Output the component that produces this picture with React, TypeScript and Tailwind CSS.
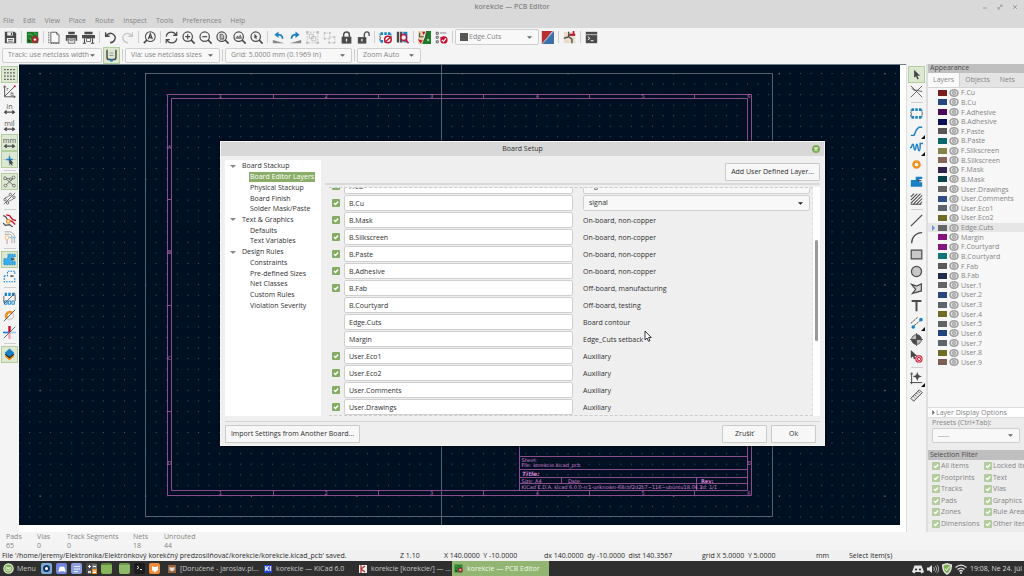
import type { ReactNode } from 'react';
import clsx from 'clsx';

const K = '#4a4a4a';
const B = '#1a81c4';
const R = '#c8102e';
const O = '#f2901a';

const magnifier = (inner: ReactNode) => (
  <>
    <circle cx="7" cy="7" r="5.8" fill="none" stroke={K} strokeWidth="1.5" />
    <path d="M11 11l4.500 4.500" stroke={K} strokeWidth="2" />
    {inner}
  </>
);

const unitArrow = <path d="M2 12.500h12M4.500 10.500L2 12.500l2.500 2M11.500 10.500l2.500 2-2.500 2" fill="none" stroke={K} strokeWidth="1.500" />;

const unitText = (label: string) => (
  <>
    <text x="8" y="8" fontSize="9" textAnchor="middle" fill="#555">{label}</text>
    {unitArrow}
  </>
);

const chip = (
  <>
    <path d="M1.500 3v2.500M14.500 3v2.500M1.500 10.500V13M14.500 10.500V13" stroke={B} strokeWidth="1.500" />
    <path d="M2 1.500h3v3.500H2zM6.500 1.500h3v3.500h-3zM11 1.500h3v3.500h-3zM2 11h3v3.500H2zM6.500 11h3v3.500h-3zM11 11h3v3.500h-3z" fill={B} />
    <path d="M1 6v1.500c1.500 0 1.500 2 0 2V11M15 6v4" fill="none" stroke={K} strokeWidth="1" />
  </>
);

const ICONS: Record<string, ReactNode> = {
  save: (
    <>
      <path d="M1 1h12l2 2v12H1z" fill={K} />
      <path d="M4 1.500h7v4H4zM3.500 8.500h9v5.500h-9z" fill="#f5f5f5" />
      <path d="M8.500 2h1.500v3H8.500zM5 10h6v1H5zM5 12h6v1H5z" fill={K} />
    </>
  ),
  setup: (
    <>
      <path d="M1 1h14v14H1z" fill="#1d7a2a" />
      <path d="M2 4h4l3 3M4 8l4 5M10 2l4 3" fill="none" stroke="#6ac06a" strokeWidth="1" />
      <circle cx="4" cy="12" r="1.200" fill="#0b3d12" />
      <circle cx="11" cy="10.500" r="3.500" fill="none" stroke={R} strokeWidth="2.200" strokeDasharray="2 .8" />
      <circle cx="11" cy="10.500" r="2" fill="#f5f5f5" stroke={R} strokeWidth="1" />
    </>
  ),
  page: (
    <>
      <path d="M3.500 1.500h7l3 3v10h-10z" fill="#fafafa" stroke={K} strokeWidth="1" />
      <path d="M10.500 1.500v3h3M1 1v14M3 15.500h11" fill="none" stroke={K} strokeWidth="1" strokeDasharray="2 1" />
    </>
  ),
  print: (
    <>
      <path d="M4 1h8v3H4zM1 5h14v7h-2V9H3v3H1z" fill={K} />
      <path d="M4 10h8v5H4z" fill="#fff" stroke={K} />
      <path d="M5.500 12h5" stroke={K} />
    </>
  ),
  plot: (
    <>
      <path d="M3 1h10v3H3zM0 5h16v4H0z" fill={K} />
      <path d="M3 9v5.500M13 9v5.500M1 15h4M11 15h4" stroke={K} strokeWidth="1.300" />
      <path d="M5.500 9h5v4h-5z" fill="#fff" stroke={K} />
    </>
  ),
  undo: <path d="M2 1.500v5h5M2 6.500C5 3 9 2 12 4.500c3.500 3 1.500 9.500-4.500 10" fill="none" stroke={K} strokeWidth="1.700" />,
  redo: <path d="M14 1.500v5H9M14 6.500C11 3 7 2 4 4.500c-3.500 3-1.500 9.500 4.500 10" fill="none" stroke="#c4c4c4" strokeWidth="1.500" />,
  find: (
    <>
      <circle cx="9" cy="7" r="6" fill="none" stroke={K} strokeWidth="1.300" />
      <path d="M5 11l-4 4" stroke={K} strokeWidth="2" />
      <path d="M6.500 10L9 3.500l2.500 6.500M7.500 8h3" fill="none" stroke={K} strokeWidth="1.600" />
    </>
  ),
  refresh: (
    <path d="M1.500 7C2 3 5 1.500 8 1.500c2.500 0 4.500 1.500 5.500 3.500M14.500 1v4.500H10M14.500 9c-.5 4-3.500 5.500-6.500 5.500-2.500 0-4.500-1.500-5.500-3.500M1.500 15v-4.500H6" fill="none" stroke={K} strokeWidth="1.500" />
  ),
  zoomIn: magnifier(<path d="M7 4v6M4 7h6" stroke={K} strokeWidth="1.500" />),
  zoomOut: magnifier(<path d="M4 7h6" stroke={K} strokeWidth="1.500" />),
  zoomFit: magnifier(<path d="M5 4h3l1.500 1.500V10H5z" fill="#bbb" stroke={K} strokeWidth="1" />),
  zoomObjects: magnifier(<path d="M3.500 9l2-3 1.500 2 2-3 1.500 4z" fill="#999" stroke={K} strokeWidth=".8" />),
  zoomTool: magnifier(<path d="M5.500 3.500l4 4-2 .2 1 2-1.200.5-.8-2-1.200 1z" fill={K} />),
  rotateLeft: (
    <>
      <path d="M1 15V11l14 4z" fill="#888" />
      <path d="M13 9.500c0-4-3-5.500-7-5" fill="none" stroke={B} strokeWidth="2.200" />
      <path d="M8 .5L3 4.500l5 4z" fill={B} />
    </>
  ),
  rotateRight: (
    <>
      <path d="M15 15V11L1 15z" fill="#888" />
      <path d="M3 9.500c0-4 3-5.500 7-5" fill="none" stroke={B} strokeWidth="2.200" />
      <path d="M8 .5l5 4-5 4z" fill={B} />
    </>
  ),
  group: (
    <>
      <path d="M1.500 1.500h13v13h-13z" fill="none" stroke="#b5b5b5" strokeDasharray="2 1.500" />
      <path d="M4 4h5v5H4zM7 7h5v5H7z" fill="none" stroke="#b5b5b5" />
      <path d="M0 0h3v3H0zM13 0h3v3h-3zM0 13h3v3H0zM13 13h3v3h-3z" fill="#c0c0c0" />
    </>
  ),
  ungroup: (
    <>
      <path d="M1.500 2.500h7v7h-7zM7.500 7.500h7v7h-7z" fill="none" stroke="#c2c2c2" strokeDasharray="2 1" />
      <path d="M1 1.500h2v2H1zM7.500 1.500h2v2h-2zM1 8.500h2v2H1zM13 6.500h2v2h-2zM6.500 13.500h2v2h-2zM13 13.500h2v2h-2z" fill="#b5b5b5" />
    </>
  ),
  lock: (
    <>
      <path d="M4.500 8V4.500C4.500 0 11.500 0 11.500 4.500V8" fill="none" stroke={K} strokeWidth="1.800" />
      <path d="M2 7h12v8.500H2z" fill={K} />
      <path d="M8 9.500v3.500" stroke="#eee" strokeWidth="1.600" />
    </>
  ),
  unlock: (
    <>
      <path d="M9 8V4.500C9 0 15 0 15 4.500V6" fill="none" stroke={K} strokeWidth="1.600" />
      <path d="M1 7.500h10.500v8H1z" fill={K} />
      <path d="M6 9.500v3.500" stroke="#eee" strokeWidth="1.600" />
    </>
  ),
  footprintEditor: (
    <>
      {chip}
      <circle cx="11" cy="10.500" r="4" fill="#fff" stroke={R} strokeWidth="1.800" />
      <path d="M8.500 13l5-5" stroke={R} strokeWidth="1.600" />
    </>
  ),
  browser: (
    <>
      <path d="M1 1h3v13H1zM5 1h3v13H5z" fill={K} />
      <path d="M9 1h5v13H9z" fill={B} />
      <circle cx="9.500" cy="8" r="3.500" fill="#eaf4fb" stroke={R} strokeWidth="1.600" />
      <path d="M12 11l3.500 4" stroke={R} strokeWidth="2" />
    </>
  ),
  update: (
    <>
      <path d="M0 0h9L5 16H0z" fill="#e8cfae" />
      <path d="M10 0h6v16H5l3-7z" fill="#1d7a2a" />
      <path d="M2 2v5h5M11 3v4l-4 5" fill="none" stroke={K} strokeWidth="1.300" />
      <path d="M5 1h4L7 5zM0 10l6 2-3 3z" fill={R} />
      <circle cx="12.500" cy="11" r="1.500" fill="#9ad79a" />
    </>
  ),
  drc: (
    <>
      <path d="M1.500 1.500h2.500v2.500H1.500zM1.500 6.500h2.500v2.500H1.500zM1.500 12h2.500v2.500H1.500z" fill="none" stroke={K} />
      <path d="M6 2.500h8M6 8h3" stroke="#888" strokeWidth="1.300" />
      <circle cx="11" cy="11" r="4.500" fill={R} />
      <path d="M8.500 11l2 2 3-4" fill="none" stroke="#fff" strokeWidth="1.500" />
    </>
  ),
  layerPair: (
    <>
      <path d="M1 0h13L1 16z" fill="#b5302f" />
      <path d="M16 0v16H2z" fill="#3c6ea8" />
      <path d="M15 0L1 16" stroke="#7f8fb4" strokeWidth="1" />
    </>
  ),
  scripting: (
    <>
      <path d="M1 1h14v14H1z" fill="#eadccb" />
      <path d="M7 1v6L1 9M7 7l4 3v5M7 5h8" fill="none" stroke={K} strokeWidth="1.600" />
      <path d="M8 3.500h7v2H8zM12 0h2v4h-2z" fill={R} />
    </>
  ),
  console: (
    <>
      <path d="M1 1h14v14H1z" fill={K} />
      <path d="M1 4.500h14" stroke="#ddd" />
      <path d="M3.500 7l2.500 2-2.500 2M7 12h3.500" fill="none" stroke="#fff" strokeWidth="1.200" />
    </>
  ),
  trackWidth: (
    <>
      <path d="M2.500 1v9c0 2 1 3 3 3h5c2 0 3-1 3-3V1" fill="none" stroke={K} strokeWidth="1.800" />
      <path d="M5.500 5h5M5.500 8h5" stroke="#999" strokeWidth="1.300" />
      <circle cx="8" cy="14" r="1.800" fill={B} />
    </>
  ),
  grid: <path d="M1.500 2h13M1.500 6h13M1.500 10h13M1.500 14h13" stroke="#3c3c3c" strokeWidth="1.700" strokeDasharray="1.700 2" />,
  polar: (
    <>
      <path d="M2 1v13.500h13M2 14L14 2M.5 3L2 1l1.500 2M13 13l2 1.500-2 1.500" fill="none" stroke={K} strokeWidth="1.100" />
      <text x="4" y="7" fontSize="7" fill={K}>r</text>
      <text x="9" y="13" fontSize="7" fill={K}>θ</text>
      <circle cx="14.500" cy="1.500" r="1.200" fill={R} />
    </>
  ),
  inch: unitText('in'),
  mil: unitText('mil'),
  mm: unitText('mm'),
  cursorShape: (
    <>
      <path d="M8 0v16M0 8h16" stroke="#b5b5b5" strokeWidth=".8" />
      <path d="M8 4v8M4 8h8" stroke={B} strokeWidth="1.800" />
      <path d="M8 7l5 5.500-2.200.2 1.200 2.500-1.300.6-1.200-2.500L8 15z" fill={K} />
    </>
  ),
  ratsnest: (
    <>
      <path d="M3 4l10 9M3 13L13 4M3 4l7 1" fill="none" stroke={K} strokeWidth=".9" />
      <g fill="#f4f8f0" stroke={K} strokeWidth=".9">
        <circle cx="2.500" cy="4" r="1.700" /><circle cx="13" cy="3" r="1.700" /><circle cx="3" cy="13" r="1.700" /><circle cx="13.500" cy="13" r="1.700" /><circle cx="9.500" cy="5" r="1.500" />
      </g>
    </>
  ),
  curvedRats: (
    <>
      <path d="M2 9c0-4 4-1 7-6M5 14c1-5 7-2 9-8M1 15L15 1" fill="none" stroke={K} strokeWidth=".9" />
      <g fill="#fff" stroke={K} strokeWidth=".9">
        <circle cx="2.500" cy="9.500" r="1.500" /><circle cx="9" cy="3" r="1.500" /><circle cx="5.500" cy="13.500" r="1.500" /><circle cx="13.500" cy="6.500" r="1.500" />
      </g>
    </>
  ),
  highContrast: (
    <>
      <path d="M0 2l3 1 4 6M0 11l3 3 5-1 4 3" fill="none" stroke={K} strokeWidth="1.500" />
      <path d="M4 1l4 1 4 5 4 1M6 8l5 1 4 4" fill="none" stroke={R} strokeWidth="1.700" />
      <circle cx="6.500" cy="9" r="2.200" fill="#fff" stroke={O} strokeWidth="1.500" />
    </>
  ),
  netHighlight: (
    <>
      <path d="M2 1h6c3 0 6 3 6 6v8M2 4h6c2 0 3 2 3 4v7" fill="none" stroke="#aaa" strokeWidth="1.200" />
      <path d="M7 8h9" stroke="#8fc1e6" strokeWidth="1.500" />
      <path d="M5 10v6" stroke="#eaa4ae" strokeWidth="1.800" />
      <circle cx="5" cy="8" r="2.200" fill="#fff" stroke="#f6c385" strokeWidth="1.300" />
    </>
  ),
  zoneFill: (
    <>
      <path d="M1 7h5V1.500h9V5h-3.500v5H15v4.500H1z" fill="#3aaee8" stroke={B} strokeWidth="1" strokeDasharray="2 1" />
      <path d="M10 7.500h4" stroke={K} strokeWidth="2" />
    </>
  ),
  zoneOutline: (
    <>
      <path d="M1.500 7h4V1.500h9V5M14.500 10v4.500h-13V7" fill="none" stroke={B} strokeWidth="1.300" strokeDasharray="2 1.300" />
      <path d="M9 7.500h4" stroke={K} strokeWidth="1.800" />
    </>
  ),
  padSketch: (
    <>
      <path d="M2 1h3v4H2zM6.500 1h3v4h-3zM11 1h3v4h-3z" fill={B} />
      <path d="M2 11h3v4H2zM6.500 11h3v4h-3zM11 11h3v4h-3z" fill="#fff" stroke={B} strokeWidth="1.200" />
      <path d="M1 5v8M15 3v8M1 15L15 1" stroke={K} strokeWidth="1" />
    </>
  ),
  viaSketch: (
    <>
      <circle cx="8" cy="8" r="5" fill="none" stroke="#d2d2d2" strokeWidth="2" />
      <path d="M3.500 12.500A6.500 6.500 0 0112.500 3.500L9.800 6.200A2.500 2.500 0 006.200 9.800z" fill={O} />
      <path d="M1 15L15 1" stroke={K} strokeWidth="1" />
    </>
  ),
  trackSketch: (
    <>
      <path d="M0 8h8" stroke={B} strokeWidth="2" />
      <path d="M8 0v8" stroke={R} strokeWidth="3" />
      <path d="M8 8h8" stroke="#9cc8ea" strokeWidth="2" />
      <path d="M8 8v8" stroke="#eda8b2" strokeWidth="3" />
      <path d="M1 15L15 1" stroke={K} strokeWidth="1" />
    </>
  ),
  layers: (
    <>
      <path d="M2 10l6 5.500 6-5.500-6-4z" fill={O} />
      <path d="M2 8l6 5 6-5-6-4z" fill="#2b2b2b" />
      <path d="M2 6l6 5 6-5-6-5.500z" fill={B} />
    </>
  ),
  arrow: <path d="M5 2v10l2.300-2 1.700 4 1.800-.8L9 9.500h3.500z" fill={K} />,
  localRats: <path d="M1 1l14 14M15 1L1 15M6 6.500h4M2 4l4 3M10 7l5 1" fill="none" stroke={K} strokeWidth="1" />,
  footprint: chip,
  route: <path d="M1 14h4l3-7 3-3h4" fill="none" stroke={B} strokeWidth="1.800" />,
  tune: <path d="M0 8h1.500c1 0 .5-4 2-4s1 7 2.500 7 1-7 2.500-7 1 8 2.500 8 1.500-3 1.500-6V3H16" fill="none" stroke={B} strokeWidth="1.700" />,
  via: <circle cx="8" cy="8" r="3.800" fill="none" stroke={O} strokeWidth="3" />,
  zone: (
    <>
      <path d="M1 6h6V2h8v3h-3.500v4H15v5.500H1z" fill={B} />
      <path d="M9 7h5" stroke={K} strokeWidth="1.600" />
    </>
  ),
  ruleArea: (
    <path d="M1 6l4-4M1 10l8-8M1 14l12-12M4.500 14.500l5-5M10 9l5-5M8 15l7-7M12 15l3-3M1 15h13" fill="none" stroke={K} strokeWidth="1.300" />
  ),
  line: <path d="M1 15L15 1" stroke={K} strokeWidth="1.500" />,
  arc: <path d="M2 15C2 8 7 2 15 2" fill="none" stroke={K} strokeWidth="1.500" />,
  rect: <path d="M1.500 2.500h13v11h-13z" fill="#c8c8c8" stroke={K} strokeWidth="1.500" />,
  circle: <circle cx="8" cy="8" r="6.200" fill="#c8c8c8" stroke={K} strokeWidth="1.500" />,
  poly: <path d="M2 3l6 2 6-2.500V11L3 14l4-5z" fill="#d4d4d4" stroke={K} strokeWidth="1.500" />,
  text: <path d="M2 2.500h12M8 2.500v12.500" fill="none" stroke={K} strokeWidth="2.400" />,
  dimension: (
    <>
      <path d="M1 9l9-8M5 12l7-6" stroke={K} strokeWidth="1.200" strokeDasharray="3 1" />
      <circle cx="4" cy="13.500" r="2.200" fill={B} />
      <circle cx="13.500" cy="4.500" r="2.200" fill={B} />
    </>
  ),
  origin: (
    <>
      <circle cx="8" cy="8" r="6" fill="#bbb" stroke={K} />
      <path d="M8 8V2a6 6 0 016 6zM8 8v6a6 6 0 01-6-6z" fill={K} />
      <path d="M8 0v16M0 8h16" stroke={K} strokeWidth="1" />
    </>
  ),
  erase: (
    <>
      <path d="M1 0v10l2.500-2 1.500 3.500L7 10.500 5.500 7.500H9z" fill={K} />
      <circle cx="11" cy="11" r="4.500" fill={R} />
      <circle cx="11" cy="11" r="3" fill="none" stroke="#fff" strokeWidth=".8" />
      <path d="M9.500 9.500l3 3M12.500 9.500l-3 3" stroke="#fff" />
    </>
  ),
  gridOrigin: (
    <>
      <path d="M2 1v14M0 13h15M.5 3L2 1l1.500 2" fill="none" stroke={K} strokeWidth="1.200" />
      <path d="M9 2l1 2.500L12.500 5.500 10 6.500 9 9 8 6.500 5.500 5.500 8 4.500z" fill={K} stroke={K} strokeWidth="1.500" />
    </>
  ),
  measure: (
    <>
      <path d="M1 11.500L11.500 1l3.500 3.500L4.500 15z" fill="#e8e8e8" stroke={K} strokeWidth="1.200" />
      <path d="M4 9l1.500 1.500M6 7l2 2M8 5l1.500 1.500M10 3l2 2" stroke={K} />
    </>
  ),
};

const Glyph = ({ name, className }: { name: string; className?: string }) => (
  <svg viewBox="0 0 16 16" className={clsx('block', className ?? 'h-[13px] w-[13px]')} aria-hidden="true">
    {ICONS[name]}
  </svg>
);

type ToolProps = { name: string; active?: boolean; menu?: boolean };

const Tool = ({ name, active, menu }: ToolProps) => (
  <button
    type="button"
    aria-label={name}
    className={clsx(
      'relative flex h-[17px] w-[17px] shrink-0 items-center justify-center',
      active && 'border border-[#b4cd9f] bg-[#dde8d3]',
    )}
  >
    <Glyph name={name} />
    {menu && (
      <svg viewBox="0 0 4 4" className="absolute right-0 bottom-0 h-1 w-1 fill-[#111]" aria-hidden="true">
        <path d="M4 0v4H0z" />
      </svg>
    )}
  </button>
);

const Sep = ({ flat }: { flat?: boolean }) => (
  <span className={clsx('flex shrink-0 items-center justify-center', flat ? 'h-[5px] w-[17px]' : 'h-[17px] w-[5px]')}>
    <span className={clsx('bg-[#cfcfcf]', flat ? 'h-px w-3' : 'h-3 w-px')} />
  </span>
);

type ToolsProps = { items: string[]; flat?: boolean; active?: string[]; menus?: string[] };

const Tools = ({ items, flat, active = [], menus = [] }: ToolsProps) => (
  <>
    {items.map((item, i) =>
      item === '|' ? <Sep key={i} flat={flat} /> : <Tool key={i} name={item} active={active.includes(item)} menu={menus.includes(item)} />,
    )}
  </>
);

type ComboProps = { label: string; value: string; className?: string; dark?: boolean; swatch?: boolean };

const Combo = ({ label, value, className, dark, swatch }: ComboProps) => (
  <span className={clsx('relative flex shrink-0 items-center rounded-[2px] border border-[#cfcfcf] bg-[#f8f8f8]', className)}>
    {swatch && <span className="ml-1 h-2 w-2 shrink-0 bg-[#555]" />}
    <select
      aria-label={label}
      className={clsx('h-full w-full appearance-none bg-transparent outline-none', swatch ? 'pl-px' : 'pl-[5px]', dark ? 'text-[#303030]' : 'text-[#858585]')}
    >
      <option>{value}</option>
    </select>
    <svg viewBox="0 0 6 3" className={clsx('pointer-events-none absolute right-[6px] h-[3px] w-[5px]', dark ? 'fill-[#222]' : 'fill-[#666]')}>
      <path d="M0 0h6L3 3z" />
    </svg>
  </span>
);

const Check = ({ label, showLabel, faded }: { label: string; showLabel?: boolean; faded?: boolean }) => (
  <label className="flex items-center gap-px whitespace-nowrap">
    <span className="grid h-2 w-2 shrink-0 place-items-center">
      <input
        type="checkbox"
        defaultChecked
        aria-label={label}
        className={clsx('col-start-1 row-start-1 h-2 w-2 appearance-none rounded-[1px]', faded ? 'bg-[#b3cc9f]' : 'bg-[#86ab64]')}
      />
      <svg viewBox="0 0 8 8" className="pointer-events-none col-start-1 row-start-1 h-2 w-2">
        <path d="M2 4l1.500 1.500L6.200 2.500" fill="none" stroke="#fff" strokeWidth="1.300" />
      </svg>
    </span>
    {showLabel && <span>{label}</span>}
  </label>
);

const MENUS = ['File', 'Edit', 'View', 'Place', 'Route', 'Inspect', 'Tools', 'Preferences', 'Help'];

const MAIN_TOOLS = [
  'save', '|', 'setup', '|', 'page', 'print', 'plot', '|', 'undo', 'redo', '|', 'find', '|',
  'refresh', 'zoomIn', 'zoomOut', 'zoomFit', 'zoomObjects', 'zoomTool', '|',
  'rotateLeft', 'rotateRight', 'group', 'ungroup', 'lock', 'unlock', '|',
  'footprintEditor', 'browser', '|', 'update', 'drc', '|',
];

const LEFT_TOOLS = [
  'grid', 'polar', 'inch', 'mil', 'mm', 'cursorShape', '|', 'ratsnest', 'curvedRats', '|',
  'highContrast', 'netHighlight', '|', 'zoneFill', 'zoneOutline', '|', 'padSketch', 'viaSketch', 'trackSketch', '|', 'layers',
];

const RIGHT_TOOLS = [
  'arrow', 'localRats', '|', 'footprint', 'route', 'tune', 'via', 'zone', 'ruleArea', '|',
  'line', 'arc', 'rect', 'circle', 'poly', 'text', 'dimension', 'origin', 'erase', '|', 'gridOrigin', 'measure',
];

const LAYERS: [string, string][] = [
  ['F.Cu', '#7a1f1f'], ['B.Cu', '#27477e'], ['F.Adhesive', '#4d0a55'], ['B.Adhesive', '#0a1157'],
  ['F.Paste', '#5a5555'], ['B.Paste', '#0a6668'], ['F.Silkscreen', '#86824a'], ['B.Silkscreen', '#86655a'],
  ['F.Mask', '#33244f'], ['B.Mask', '#08444c'], ['User.Drawings', '#646464'], ['User.Comments', '#2f4e86'],
  ['User.Eco1', '#5d646c'], ['User.Eco2', '#6f6d25'], ['Edge.Cuts', '#636767'], ['Margin', '#85157f'],
  ['F.Courtyard', '#85157f'], ['B.Courtyard', '#127679'], ['F.Fab', '#5a5a5a'], ['B.Fab', '#222b49'],
  ['User.1', '#646464'], ['User.2', '#27477e'], ['User.3', '#5d646c'], ['User.4', '#6f6d25'],
  ['User.5', '#5f6464'], ['User.6', '#1f437a'], ['User.7', '#5d646c'], ['User.8', '#6f6d25'], ['User.9', '#7d5f55'],
];

const FILTERS = [
  'All items', 'Locked items', 'Footprints', 'Text', 'Tracks', 'Vias',
  'Pads', 'Graphics', 'Zones', 'Rule Areas', 'Dimensions', 'Other items',
];

const TREE = [
  { title: 'Board Stackup', pages: ['Board Editor Layers', 'Physical Stackup', 'Board Finish', 'Solder Mask/Paste'] },
  { title: 'Text & Graphics', pages: ['Defaults', 'Text Variables'] },
  { title: 'Design Rules', pages: ['Constraints', 'Pre-defined Sizes', 'Net Classes', 'Custom Rules', 'Violation Severity'] },
];

const SETUP_ROWS = [
  { name: 'F.Cu', use: 'signal', optional: true },
  { name: 'B.Cu', use: 'signal', optional: true },
  { name: 'B.Mask', use: 'On-board, non-copper', optional: true },
  { name: 'B.Silkscreen', use: 'On-board, non-copper', optional: true },
  { name: 'B.Paste', use: 'On-board, non-copper', optional: true },
  { name: 'B.Adhesive', use: 'On-board, non-copper', optional: true },
  { name: 'B.Fab', use: 'Off-board, manufacturing', optional: true },
  { name: 'B.Courtyard', use: 'Off-board, testing', optional: false },
  { name: 'Edge.Cuts', use: 'Board contour', optional: false },
  { name: 'Margin', use: 'Edge_Cuts setback', optional: false },
  { name: 'User.Eco1', use: 'Auxiliary', optional: true },
  { name: 'User.Eco2', use: 'Auxiliary', optional: true },
  { name: 'User.Comments', use: 'Auxiliary', optional: true },
  { name: 'User.Drawings', use: 'Auxiliary', optional: true },
];

const COUNTS = [
  ['Pads', '65'], ['Vias', '0'], ['Track Segments', '0'], ['Nets', '18'], ['Unrouted', '44'],
];

// Drawing sheet in screen units: 1 mm is 2.112 units.
const BoardCanvas = () => (
  <svg viewBox="19 65 881 460" preserveAspectRatio="xMinYMin slice" className="h-full w-full bg-[#001023]">
    <defs>
      <pattern id="dots" x="24.200" y="68.200" width="10.560" height="10.560" patternUnits="userSpaceOnUse">
        <rect x="4.800" y="4.800" width="1" height="1" fill="#4a5563" />
      </pattern>
      <pattern id="majorDots" x="34.760" y="68.500" width="105.600" height="105.600" patternUnits="userSpaceOnUse">
        <rect x="4.800" y="4.800" width="1" height="1" fill="#8b929b" />
      </pattern>
    </defs>
    <rect x="19" y="65" width="881" height="460" fill="url(#dots)" />
    <rect x="19" y="65" width="881" height="460" fill="url(#majorDots)" />
    <g fill="none" stroke="#56616d">
      <path d="M145.500 73.500h627v443h-627zM441.500 65v460" />
    </g>
    <g fill="none" stroke="#8d4c8c">
      <path d="M167.500 94.500h584v401h-584zM171.500 98.500h576v392h-576z" />
      <path d="M273.500 94.500v4M378.500 94.500v4M483.500 94.500v4M589.500 94.500v4M694.500 94.500v4M273.500 490.500v5M378.500 490.500v5M483.500 490.500v5M589.500 490.500v5M694.500 490.500v5" />
      <path d="M167.500 199.500h4M167.500 305.500h4M167.500 411.500h4M747.500 199.500h4M747.500 305.500h4M747.500 411.500h4" />
      <path d="M519.500 425v65.500M519.500 456.500h228M519.500 469.500h228M519.500 477.500h228M519.500 483.500h228M561.500 477.500v6M696.500 477.500v13" />
    </g>
    <g fill="#c06fbe" fontSize="5" fontFamily="'DejaVu Sans', sans-serif">
      {[1, 2, 3, 4, 5, 6].map((n) => (
        <g key={n} textAnchor="middle">
          <text x={114.600 + n * 105.700} y="98.400">{n}</text>
          <text x={114.600 + n * 105.700} y="495">{n}</text>
        </g>
      ))}
      {['A', 'B', 'C', 'D'].map((row, i) => (
        <g key={row} textAnchor="middle">
          <text x="169.500" y={148.500 + i * 105.600}>{row}</text>
          <text x="749.500" y={148.500 + i * 105.600}>{row}</text>
        </g>
      ))}
    </g>
    <g fill="#d67fd2" fontSize="5" fontFamily="'DejaVu Sans', sans-serif">
      <text x="521.500" y="461.500">Sheet:</text>
      <text x="521.500" y="467">File: korekcie.kicad_pcb</text>
      <text x="522" y="475.500" fontSize="6" fontWeight="bold" fontStyle="italic">Title:</text>
      <text x="521.500" y="482.500">Size: A4</text>
      <text x="568" y="482.500">Date:</text>
      <text x="701" y="482.500" fontWeight="bold">Rev:</text>
      <text x="521.500" y="489">KiCad E.D.A.  kicad 6.0.0-rc1-unknown-68cbf2d2b7~116~ubuntu18.04.1</text>
      <text x="701" y="489">Id: 1/1</text>
    </g>
  </svg>
);

const Eye = () => (
  <svg viewBox="0 0 10 8" className="h-2 w-[10px] shrink-0" aria-hidden="true">
    <ellipse cx="5" cy="4" rx="4" ry="3.200" fill="#e4e4e4" stroke="#a0a0a0" strokeWidth="1.600" />
    <circle cx="5" cy="4" r="1.700" fill="#bbb" stroke="#a0a0a0" strokeWidth=".8" />
  </svg>
);

const AppearancePanel = () => (
  <aside className="flex w-24 shrink-0 flex-col overflow-hidden bg-[#ececec] text-[#858585]">
    <h2 className="h-[9px] bg-[#bfbfbf] pl-[2px] leading-[8px] text-[#4d4d4d]">Appearance</h2>
    <div className="flex h-[15px] items-end border-b border-[#d4d4d4] bg-[#e4e4e4]" role="tablist">
      <button type="button" role="tab" className="h-[14px] border-r border-[#d0d0d0] bg-[#fafafa] px-[5px]">Layers</button>
      <button type="button" role="tab" className="h-[14px] px-[5px]">Objects</button>
      <button type="button" role="tab" className="h-[14px] px-[5px]">Nets</button>
    </div>
    <div className="min-h-0 flex-1 bg-[#f7f7f7]">
      <ul className="flex h-[279px] flex-col">
        {LAYERS.map(([name, color]) => (
          <li key={name} className={clsx('flex min-h-0 flex-1 items-center pl-[4px]', name === 'Edge.Cuts' && 'bg-[#e6e6e6]')}>
            <svg viewBox="0 0 3 6" className="h-[6px] w-[3px] shrink-0 fill-[#6d8fd8]" aria-hidden="true">
              {name === 'Edge.Cuts' && <path d="M0 0l3 3-3 3z" />}
            </svg>
            <button type="button" aria-label={name} className="ml-[3px] h-[6px] w-[9px] shrink-0" style={{ backgroundColor: color }} />
            <span className="mr-[2px] ml-[2px] flex"><Eye /></span>
            <span className="leading-[9px]">{name}</span>
          </li>
        ))}
      </ul>
    </div>
    <button type="button" className="flex h-[11px] items-center gap-px border-y border-[#ddd] bg-white pl-1">
      <svg viewBox="0 0 3 6" className="h-[5px] w-[3px] fill-[#666]"><path d="M0 0l3 3-3 3z" /></svg>
      Layer Display Options
    </button>
    <label className="flex flex-col px-1 pb-[7px] leading-[10px]">
      Presets (Ctrl+Tab):
      <Combo label="Presets" value="-----" className="h-[15px] w-full" />
    </label>
    <h2 className="h-[10px] bg-[#bfbfbf] pl-[2px] leading-[9px] font-medium text-[#4d4d4d]">Selection Filter</h2>
    <div className="grid h-[72px] grid-cols-[52px_1fr] content-evenly pb-[2px] pl-1 leading-[10px]">
      {FILTERS.map((name) => <Check key={name} label={name} showLabel faded />)}
    </div>
  </aside>
);

const SetupTree = () => (
  <nav className="w-24 shrink-0 bg-white pt-[1px]">
    <ul className="flex h-[150px] flex-col">
      {TREE.map((section) => [
        <li key={section.title} className="flex min-h-0 flex-1 items-center gap-[6px] pl-[5px]">
          <svg viewBox="0 0 6 3" className="h-[3px] w-[6px] fill-[#888]"><path d="M0 0h6L3 3z" /></svg>
          {section.title}
        </li>,
        ...section.pages.map((page) => (
          <li key={page} className="flex min-h-0 flex-1 items-center pl-6">
            <a href="#" className={clsx('px-px leading-[10px]', page === 'Board Editor Layers' && 'bg-[#8aae68] text-white')}>{page}</a>
          </li>
        )),
      ])}
    </ul>
  </nav>
);

const buttonStyle = 'h-[18px] rounded-[1px] border border-[#cacaca] bg-[#f7f7f7]';

const BoardSetupDialog = () => (
  <div
    role="dialog"
    aria-label="Board Setup"
    className="absolute top-[141px] left-[220px] flex h-[305px] w-[605px] flex-col border border-[#f4f4f4] bg-[#efefef] text-[#303030] shadow-[0_0_3px_#000]"
  >
    <header className="relative flex h-[14px] shrink-0 items-center justify-center bg-[#d8d8d8] font-medium">
      Board Setup
      <button type="button" aria-label="Close" className="absolute right-[4px] flex h-2 w-2 items-center justify-center rounded-full bg-[#7fab58]">
        <svg viewBox="0 0 6 6" className="h-[6px] w-[6px]"><path d="M1.500 1.500l3 3M4.500 1.500l-3 3" stroke="#fff" strokeWidth="1.200" /></svg>
      </button>
    </header>
    <div className="flex min-h-0 flex-1 px-1 pt-[4px]">
      <SetupTree />
      <section className="ml-1 flex min-w-0 flex-1 flex-col">
        <div className="flex h-[25px] shrink-0 items-start justify-end border-b-2 border-[#dadada] pt-[3px]">
          <button type="button" className={clsx(buttonStyle, 'w-[95px]')}>Add User Defined Layer...</button>
        </div>
        <div className="mt-[2px] flex min-h-0 flex-1">
          <div className="ml-1 flex min-w-0 flex-1 flex-col justify-end gap-px overflow-hidden border-y border-r border-dashed border-[#cccccc] border-r-[#e0e0e0]">
            {SETUP_ROWS.map((row) => (
              <div key={row.name} className="grid h-4 shrink-0 grid-cols-[15px_229px_1fr] items-center">
                <span className="pl-[3px]">{row.optional && <Check label={row.name} />}</span>
                <input
                  aria-label={`${row.name} name`}
                  defaultValue={row.name}
                  className="h-4 rounded-[2px] border border-[#cfcfcf] bg-white px-1 outline-none"
                />
                {row.use === 'signal' ? (
                  <Combo label={`${row.name} type`} value="signal" dark className="mr-[2px] ml-[10px] h-4" />
                ) : (
                  <span className="pt-px pl-[10px]">{row.use}</span>
                )}
              </div>
            ))}
          </div>
          <div className="w-[7px] shrink-0 bg-white pt-[53px] pl-[2px]">
            <div className="h-[101px] w-[3px] rounded-full bg-[#999]" />
          </div>
        </div>
      </section>
    </div>
    <footer className="mx-1 mt-[5px] flex h-6 shrink-0 items-start border-t border-[#d4d4d4] pt-[3px]">
      <button type="button" className={clsx(buttonStyle, 'w-[135px]')}>Import Settings from Another Board...</button>
      <button type="button" className={clsx(buttonStyle, 'ml-auto w-[45px]')}>Zrušiť</button>
      <button type="button" className={clsx(buttonStyle, 'mr-1 ml-1 w-[45px]')}>Ok</button>
    </footer>
    <svg viewBox="0 0 8 12" className="absolute top-[188px] left-[423px] h-3 w-2" aria-hidden="true">
      <path d="M1 1v9l2-2 1.500 3.300 1.500-.7L4.600 7.500h2.700z" fill="#fff" stroke="#222" strokeWidth=".9" />
    </svg>
  </div>
);

const Launcher = ({ children, className }: { children?: ReactNode; className: string }) => (
  <span className={clsx('flex h-[11px] w-[11px] shrink-0 items-center justify-center rounded-[2px]', className)}>{children}</span>
);

const Taskbar = () => (
  <footer className="flex h-[15px] shrink-0 items-center bg-[#2f2f2f] text-[#c8c8c8]">
    <button type="button" className="flex w-[41px] items-center gap-[3px] pl-[3px]">
      <svg viewBox="0 0 12 12" className="h-[11px] w-[11px]">
        <circle cx="6" cy="6" r="5.700" fill="#e9f2e0" />
        <circle cx="6" cy="6" r="4.500" fill="#7fae53" />
        <path d="M3.500 3.500v3.500c0 1 .6 1.500 1.500 1.500h2c1 0 1.500-.6 1.500-1.500V5.500c0-1.200-1.500-1.200-1.500 0V7M6 7V5.500c0-1.200-1.300-1.200-1.300 0V7" fill="none" stroke="#fff" strokeWidth=".8" />
      </svg>
      Menu
    </button>
    <div className="flex gap-[4px]">
      <Launcher className="bg-[#7aabdc]"><span className="h-[7px] w-[7px] rounded-full border-2 border-[#17365c] bg-white" /></Launcher>
      <Launcher className="bg-[#7486dc]"><svg viewBox="0 0 10 8" className="h-[6px] w-2"><path d="M2 1h6l2 6-2 1-1-1H3L2 8 0 7z" fill="#fff" /></svg></Launcher>
      <Launcher className="bg-[#8b9fe0]"><svg viewBox="0 0 8 8" className="h-2 w-2"><path d="M1 1.500h6M1 4h6M1 6.500h4" stroke="#e8edff" /></svg></Launcher>
      <Launcher className="bg-[#4a4a4a]"><svg viewBox="0 0 10 10" className="h-[10px] w-[10px]"><path d="M5 0h5v5H5z" fill="#777" /><path d="M5 5h5v5H5z" fill="#f08a24" /><path d="M1 2.500h3M2.500 1v3M6 2.500h3M1 7l3 2M4 7L1 9M6 7h3M6 8.500h3" stroke="#fff" /></svg></Launcher>
      <Launcher className="border-t-2 border-[#5f853a] bg-[#86b55b]" />
    </div>
    <div className="ml-[7px] flex gap-[4px]">
      <Launcher className="border-t-2 border-[#6c9a49] bg-[#8fba6a]" />
      <Launcher className="bg-[#1c1c1c]"><svg viewBox="0 0 8 8" className="h-2 w-2"><path d="M1 1l2 1.500L1 4M4 4.500h2" fill="none" stroke="#ddd" /></svg></Launcher>
      <Launcher className="bg-[#f0893a]"><svg viewBox="0 0 8 8" className="h-2 w-2"><path d="M1 1l2 1h2l2-1v4L4 7.500 1 5z" fill="#fff" /></svg></Launcher>
    </div>
    <button type="button" className="ml-[8px] flex w-24 items-center gap-[4px] whitespace-nowrap">
      <svg viewBox="0 0 8 8" className="h-2 w-2 shrink-0"><path d="M0 0h8v8H0z" fill="#9a6239" /><path d="M1.500 2l1.500.5h2L6.500 2v3L4 6.500 1.500 5z" fill="#ddd" /></svg>
      [Doručené - jaroslav.pi...
    </button>
    <button type="button" className="flex w-[95px] items-center gap-[4px] whitespace-nowrap">
      <span className="w-2 shrink-0 bg-[#2340c8] text-center leading-[8px] font-bold text-white">Ki</span>
      korekcie — KiCad 6.0
    </button>
    <button type="button" className="flex w-[93px] items-center gap-[4px] whitespace-nowrap">
      <svg viewBox="0 0 8 8" className="h-2 w-2 shrink-0"><path d="M0 0h8v8H0z" fill="#eee" /><path d="M2 0v8M2 4l4-3M2 4l4 3" stroke="#b42b2b" strokeWidth="1.200" /></svg>
      korekcie [korekcie/] — ...
    </button>
    <button type="button" className="flex h-full w-[97px] items-center gap-[4px] bg-[#92b572] pl-[2px] whitespace-nowrap text-[#f0f5ea]">
      <Glyph name="setup" className="h-[9px] w-[9px] shrink-0" />
      korekcie — PCB Editor
    </button>
    <div className="ml-auto flex items-center gap-[3px] pr-[2px] whitespace-nowrap text-[#dcdcdc]">
      <svg viewBox="0 0 12 10" className="h-[10px] w-3"><path d="M2.500 1.500h7L12 8l-2.500 1.500-1-1.500h-5l-1 1.500L0 8z" fill="#e6e6e6" /><circle cx="4" cy="5.500" r="1.100" fill="#2f2f2f" /><circle cx="8" cy="5.500" r="1.100" fill="#2f2f2f" /></svg>
      <svg viewBox="0 0 12 10" className="h-[10px] w-3"><path d="M0 3.500h2L5 1v8L2 6.500H0z" fill="#e6e6e6" /><path d="M6.500 3c1 1 1 3 0 4M8.200 1.800c1.800 1.800 1.800 4.600 0 6.400M10 .8c2.200 2.400 2.200 6 0 8.400" fill="none" stroke="#bbb" strokeWidth=".9" /></svg>
      <svg viewBox="0 0 10 12" className="h-3 w-[10px]"><path d="M5 0l5 1.500c0 5-1 8-5 10.500C1 9.500 0 6.500 0 1.500z" fill="#e6e6e6" /><path d="M5 1.500l3.500 1c0 4-1 6-3.500 8C2.500 8.500 1.500 6.500 1.500 2.500z" fill="#7fae53" /><path d="M3 5.500l1.500 2L7.500 3.500" fill="none" stroke="#fff" /></svg>
      <svg viewBox="0 0 12 10" className="h-[10px] w-3"><path d="M.5 3.500C4 .5 8 .5 11.500 3.500M2.500 5.500c2-2 5-2 7 0M4.200 7.300c1-1 2.600-1 3.600 0" fill="none" stroke="#e6e6e6" strokeWidth="1.200" /><circle cx="6" cy="9" r="1" fill="#e6e6e6" /></svg>
      <span>19:08, Ne 24. júl</span>
    </div>
  </footer>
);

const WINDOW_BUTTONS = [
  ['Minimize', 'M1 4h4'],
  ['Restore', 'M1 5l4-4M3 1h2v2M1 3v2h2'],
  ['Close', 'M1 1l4 4M5 1L1 5'],
];

export default function App() {
  return (
    <div className="relative flex h-screen flex-col overflow-hidden bg-[#f4f4f4] font-['Open_Sans','Noto_Sans',sans-serif] text-[7px] leading-[10px] text-[#303030]">
      <header className="shrink-0 bg-[#d9d9d9] text-[#858585]">
        <div className="relative flex h-[14px] items-center justify-center">
          <h1 className="font-semibold">korekcie — PCB Editor</h1>
          <div className="absolute right-[6px] flex gap-[9px]">
            {WINDOW_BUTTONS.map(([label, d]) => (
              <button type="button" key={label} aria-label={label}>
                <svg viewBox="0 0 6 6" className="h-[6px] w-[6px]"><path d={d} fill="none" stroke="#a0a0a0" /></svg>
              </button>
            ))}
          </div>
        </div>
        <nav className="flex h-[14px] items-center gap-[9px] pl-[3px]">
          {MENUS.map((menu) => <button type="button" key={menu}>{menu}</button>)}
        </nav>
      </header>

      <div className="flex h-[18px] shrink-0 items-center pl-[2px]">
        <Tools items={MAIN_TOOLS} />
        <Combo label="Layer" value="Edge.Cuts" swatch className="h-4 w-[84px]" />
        <Tools items={['layerPair', '|', 'scripting', '|', 'console']} />
      </div>
      <div className="flex h-[18px] shrink-0 items-center pl-[2px]">
        <Combo label="Track width" value="Track: use netclass width" className="mr-px h-[15px] w-[100px]" />
        <Tool name="trackWidth" active />
        <Sep />
        <Combo label="Via size" value="Via: use netclass sizes" className="h-[15px] w-[95px]" />
        <Sep />
        <Combo label="Grid" value="Grid: 5.0000 mm (0.1969 in)" className="h-[15px] w-[127px]" />
        <Sep />
        <Combo label="Zoom" value="Zoom Auto" className="h-[15px] w-16" />
      </div>

      <main className="flex min-h-0 flex-1">
        <div className="flex w-[19px] shrink-0 flex-col items-center pt-[2px]">
          <Tools items={LEFT_TOOLS} flat active={['grid', 'mm', 'cursorShape', 'ratsnest', 'zoneFill', 'layers']} />
        </div>
        <div className="min-w-0 flex-1 border-t border-[#6f7b85] bg-white pr-[6px] pb-[7px]">
          <BoardCanvas />
        </div>
        <div className="flex w-[22px] shrink-0 flex-col items-center border-r-2 border-l border-[#dedede] pt-[2px]">
          <Tools items={RIGHT_TOOLS} flat active={['arrow']} menus={['route', 'tune', 'dimension', 'gridOrigin']} />
        </div>
        <AppearancePanel />
      </main>

      <dl className="grid h-[18px] shrink-0 grid-cols-[31px_30px_66px_31px_1fr] pl-[6px] text-[#858585]">
        {COUNTS.map(([label, count]) => (
          <div key={label} className="leading-[9px]">
            <dt>{label}</dt>
            <dd>{count}</dd>
          </div>
        ))}
      </dl>
      <div className="grid h-[11px] shrink-0 grid-cols-[1fr_44px_100px_158px_114px_33px_175px] items-center bg-[#f0f0f0] pl-[2px] whitespace-pre text-[#2a2a2a]">
        <span>File '/home/jeremy/Elektronika/Elektrónkový korekčný predzosilňovač/korekcie/korekcie.kicad_pcb' saved.</span>
        <span>Z 1.10</span>
        <span>X 140.0000  Y -10.0000</span>
        <span>dx 140.0000  dy -10.0000  dist 140.3567</span>
        <span>grid X 5.0000  Y 5.0000</span>
        <span>mm</span>
        <span>Select item(s)</span>
      </div>
      <Taskbar />
      <BoardSetupDialog />
    </div>
  );
}
